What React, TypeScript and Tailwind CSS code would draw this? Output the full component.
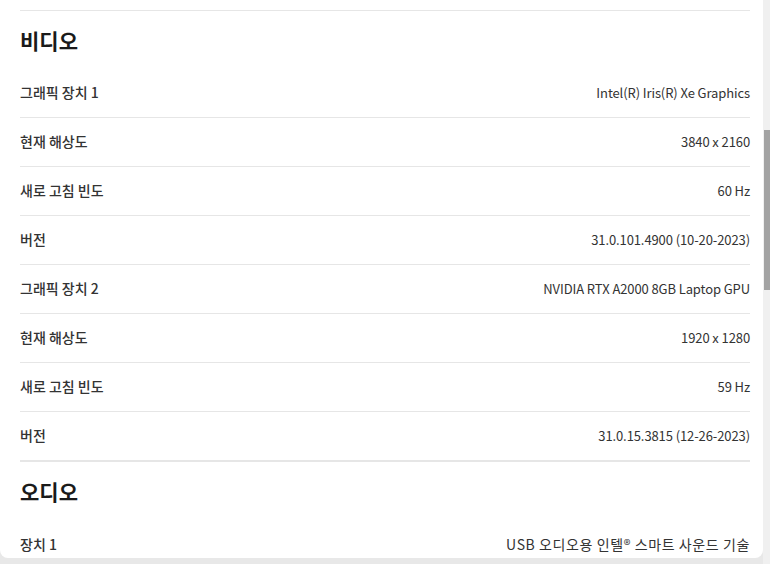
import React from "react";

type Row = { label: string; value: string };

const video: Row[] = [
  { label: "그래픽 장치 1", value: "Intel(R) Iris(R) Xe Graphics" },
  { label: "현재 해상도", value: "3840 x 2160" },
  { label: "새로 고침 빈도", value: "60 Hz" },
  { label: "버전", value: "31.0.101.4900 (10-20-2023)" },
  { label: "그래픽 장치 2", value: "NVIDIA RTX A2000 8GB Laptop GPU" },
  { label: "현재 해상도", value: "1920 x 1280" },
  { label: "새로 고침 빈도", value: "59 Hz" },
  { label: "버전", value: "31.0.15.3815 (12-26-2023)" },
];

const audio: Row[] = [{ label: "장치 1", value: "USB 오디오용 인텔® 스마트 사운드 기술" }];

function SectionTitle({ title }: { title: string }) {
  return (
    <div className="border-t border-[#e6e6e6] pt-[18px] pb-[18px]">
      <h2 className="text-[21px] leading-[22px] font-bold text-[#1a1a1a]">{title}</h2>
    </div>
  );
}

function InfoRow({ row, last, wide }: { row: Row; last?: boolean; wide?: boolean }) {
  return (
    <div
      className={
        "flex items-center justify-between h-[49px] pb-[1px] " +
        (last ? "" : "border-b border-[#e6e6e6]")
      }
    >
      <span className="text-[14px] font-medium text-[#333]">{row.label}</span>
      <span
        className={
          "text-[#333] " + (wide ? "text-[14px] tracking-[0.6px]" : "text-[13px] tracking-[-0.1px]")
        }
      >
        {row.value}
      </span>
    </div>
  );
}

export default function App() {
  return (
    <div
      className="w-[770px] h-[564px] bg-[#e8e8e8] flex overflow-hidden"
      style={{ fontFamily: '"Noto Sans CJK KR", "Noto Sans", sans-serif' }}
    >
      <div className="w-[763px] h-[558px] bg-white rounded-b-[8px] overflow-hidden pl-[20px] pr-[13px] pt-[10px]">
        <SectionTitle title="비디오" />
        {video.map((r, i) => (
          <InfoRow key={i} row={r} />
        ))}
        <SectionTitle title="오디오" />
        {audio.map((r, i) => (
          <InfoRow key={i} row={r} last wide />
        ))}
      </div>
      <div className="w-[7px] h-[564px] bg-[#f0f0f0] flex flex-col">
        <div className="mt-[130px] ml-[1px] h-[160px] bg-[#a3a3a3]" />
      </div>
    </div>
  );
}
